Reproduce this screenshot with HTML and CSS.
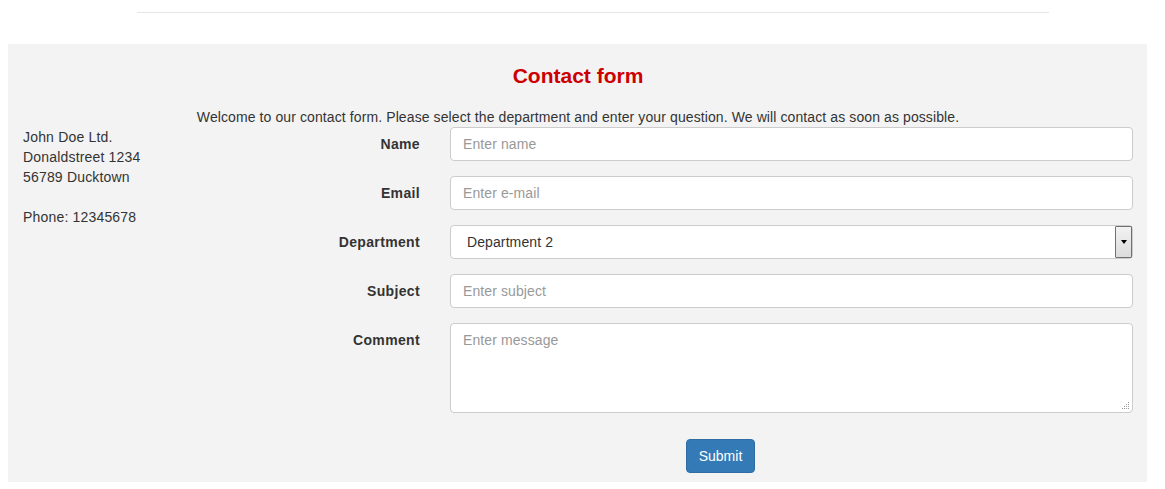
FILE: index.html
```html
<!DOCTYPE html>
<html lang="en">
<head>
<meta charset="utf-8">
<title>Contact form</title>
<link rel="stylesheet" href="styles.css">
</head>
<body>
<div class="rule"></div>
<section class="contact">
  <h2 class="contact-title">Contact form</h2>
  <p class="welcome">Welcome to our contact form. Please select the department and enter your question. We will contact as soon as possible.</p>
  <div class="contact-body">
    <aside class="address">
      <div>John Doe Ltd.</div>
      <div>Donaldstreet 1234</div>
      <div>56789 Ducktown</div>
      <div class="phone">Phone: 12345678</div>
    </aside>
    <form class="form">
      <label class="label" for="name">Name</label>
      <input class="control" id="name" type="text" placeholder="Enter name">

      <label class="label" for="email">Email</label>
      <input class="control" id="email" type="text" placeholder="Enter e-mail">

      <label class="label" for="dept">Department</label>
      <div class="select-wrap">
        <select class="control select" id="dept">
          <option>Department 1</option>
          <option selected>Department 2</option>
          <option>Department 3</option>
        </select>
        <span class="select-btn"><span class="select-caret"></span></span>
      </div>

      <label class="label" for="subject">Subject</label>
      <input class="control" id="subject" type="text" placeholder="Enter subject">

      <label class="label" for="comment">Comment</label>
      <div class="textarea-wrap">
        <textarea class="control textarea" id="comment" placeholder="Enter message"></textarea>
        <svg class="grip" width="8" height="8" viewBox="0 0 8 8">
          <rect x="6" y="0" width="1" height="1" fill="#999"/>
          <rect x="4" y="2" width="1" height="1" fill="#999"/>
          <rect x="6" y="2" width="1" height="1" fill="#999"/>
          <rect x="2" y="4" width="1" height="1" fill="#999"/>
          <rect x="4" y="4" width="1" height="1" fill="#999"/>
          <rect x="6" y="4" width="1" height="1" fill="#999"/>
          <rect x="0" y="6" width="1" height="1" fill="#999"/>
          <rect x="2" y="6" width="1" height="1" fill="#999"/>
          <rect x="4" y="6" width="1" height="1" fill="#999"/>
          <rect x="6" y="6" width="1" height="1" fill="#999"/>
        </svg>
      </div>

      <div class="actions">
        <button class="btn" type="button">Submit</button>
      </div>
    </form>
  </div>
</section>
</body>
</html>
```

FILE: styles.css
```css
html, body {
  margin: 0;
  padding: 0;
  background: #fff;
}
body {
  padding: 8px;
  font-family: "Liberation Sans", Arial, Helvetica, sans-serif;
  font-size: 14px;
  line-height: 20px;
  color: #333;
  letter-spacing: 0.1px;
}
.rule {
  margin: 4px 0 0 129px;
  width: 912px;
  height: 0;
  border-top: 1px solid #e6e6e6;
}
.contact {
  margin-top: 31px;
  width: 1139px;
  box-sizing: border-box;
  background: #f3f3f3;
  padding: 20px 14px 9px 15px;
}
.contact-title {
  margin: 0;
  text-align: center;
  color: #cc0000;
  font-size: 21px;
  line-height: 24px;
  font-weight: bold;
  letter-spacing: 0;
}
.welcome {
  margin: 19px 0 0;
  text-align: center;
}
.contact-body {
  display: flex;
}
.address {
  width: 175px;
  flex: none;
  letter-spacing: 0.18px;
}
.phone {
  margin-top: 20px;
}
.form {
  flex: 1;
  display: grid;
  grid-template-columns: 1fr 683px;
  column-gap: 30px;
  row-gap: 15px;
  margin: 0;
}
.label {
  text-align: right;
  font-weight: bold;
  padding-top: 7px;
  letter-spacing: 0.35px;
}
.control {
  display: block;
  width: 100%;
  height: 34px;
  box-sizing: border-box;
  margin: 0;
  padding: 6px 12px;
  font-family: inherit;
  font-size: 14px;
  line-height: 20px;
  letter-spacing: 0.1px;
  color: #555;
  background: #fff;
  border: 1px solid #ccc;
  border-radius: 4px;
  outline: none;
}
.control::placeholder {
  color: #999;
  opacity: 1;
}
.select-wrap,
.textarea-wrap {
  position: relative;
}
.select {
  -webkit-appearance: none;
  appearance: none;
  padding-left: 16px;
  color: #333;
}
.select-btn {
  position: absolute;
  right: 1px;
  top: 1px;
  width: 15px;
  height: 30px;
  border: 1px solid #707070;
  border-radius: 1px;
  background: linear-gradient(#f2f2f2, #dcdcdc);
  display: flex;
  align-items: center;
  justify-content: center;
  pointer-events: none;
}
.select-caret {
  width: 0;
  height: 0;
  border-left: 3px solid transparent;
  border-right: 3px solid transparent;
  border-top: 4px solid #000;
}
.textarea {
  height: 90px;
  resize: none;
}
.grip {
  position: absolute;
  right: 3px;
  bottom: 3px;
}
.actions {
  grid-column: 2;
  margin-top: 11px;
}
.btn {
  display: block;
  margin-left: 236px;
  width: 69px;
  height: 34px;
  padding: 6px 0;
  box-sizing: border-box;
  font-family: inherit;
  font-size: 14px;
  line-height: 20px;
  color: #fff;
  background: #337ab7;
  border: 1px solid #2e6da4;
  border-radius: 4px;
  cursor: pointer;
}
```
